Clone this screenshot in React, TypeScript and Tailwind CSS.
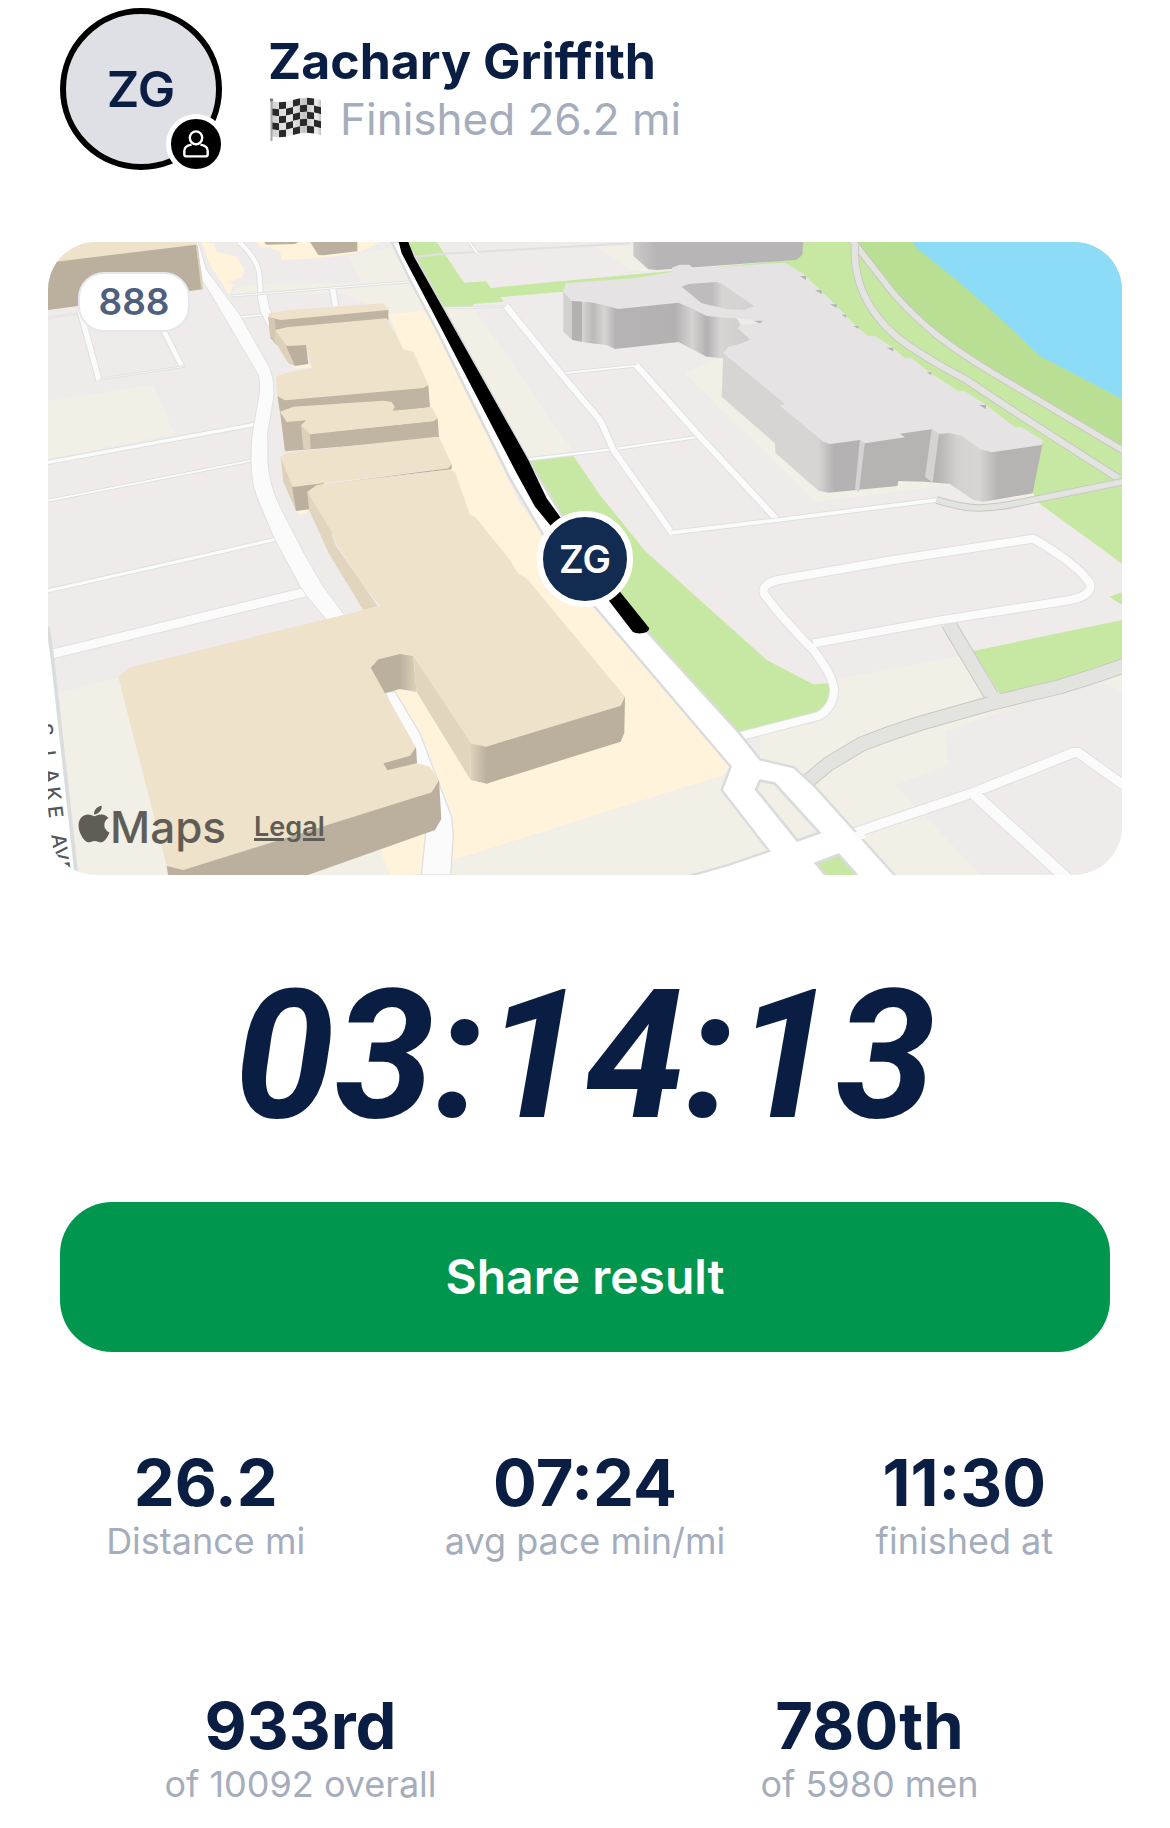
import React from 'react';
import { FaApple } from 'react-icons/fa';

interface Stat {
  value: string;
  label: string;
}

interface RoadProps {
  d: string;
  width: number;
  kind?: 'street' | 'path';
}

const SPLITS: Stat[] = [
  { value: '26.2', label: 'Distance mi' },
  { value: '07:24', label: 'avg pace min/mi' },
  { value: '11:30', label: 'finished at' },
];

const PLACINGS: Stat[] = [
  { value: '933rd', label: 'of 10092 overall' },
  { value: '780th', label: 'of 5980 men' },
];

// Each road is stroked twice: casing first, then the surface
const Road: React.FC<RoadProps> = ({ d, width, kind = 'street' }) => (
  <g fill="none" strokeLinejoin="round">
    <path d={d} stroke={kind === 'street' ? '#dfe0e1' : '#c8c8c3'} strokeWidth={width + 4} />
    <path d={d} stroke={kind === 'street' ? '#fbfbfb' : '#e3e4e0'} strokeWidth={width - 2} />
  </g>
);

const PersonIcon = () => (
  <svg viewBox="0 0 26 28" className="h-7 w-[26px]" fill="none" stroke="#fff" strokeWidth="2.4" aria-hidden="true">
    <ellipse cx="13" cy="7.8" rx="6.2" ry="6.4" />
    <path d="M8.6 14.6C4 15.4 1.3 17.6 1.3 21v3.2c0 1.4.8 2.2 2.2 2.2h19c1.4 0 2.2-.8 2.2-2.2V21c0-3.400-2.700-5.600-7.300-6.400" />
  </svg>
);

const FLAG_CELLS = [0, 1, 2, 3, 4].flatMap((row) => [0, 1, 2, 3, 4, 5, 6].map((col) => ({ row, col })));

const flagWave = (x: number) => 4.5 + Math.sin((x / 50) * Math.PI * 2) * 2 - x * 0.02;

const CheckeredFlag = () => (
  <svg viewBox="0 0 54 46" className="h-[46px] w-[54px]" aria-hidden="true">
    <defs>
      <linearGradient id="flagCloth" gradientUnits="userSpaceOnUse" x1="4" x2="54" y1="0" y2="0">
        <stop offset="0" stopColor="#cfcfcf" />
        <stop offset=".35" stopColor="#ececec" />
        <stop offset=".65" stopColor="#c4c4c4" />
        <stop offset=".9" stopColor="#ededed" />
        <stop offset="1" stopColor="#b5b5b5" />
      </linearGradient>
    </defs>
    {FLAG_CELLS.map(({ row, col }) => {
      const x = 4 + col * 7;
      const top = flagWave(x) + row * 7;
      const next = flagWave(x + 7) + row * 7;
      return (
        <path
          key={`${row}-${col}`}
          d={`M${x} ${top}L${x + 7} ${next}V${next + 7}L${x} ${top + 7}Z`}
          fill={(row + col) % 2 === 1 ? '#2a2a2a' : 'url(#flagCloth)'}
        />
      );
    })}
    <path d="M3.500 3v42" stroke="#a3a9ae" strokeWidth="2" />
    <circle cx="3.500" cy="4" r="1.800" fill="#6f7b86" />
  </svg>
);

const MapScene = () => (
  <svg viewBox="24 36 3222 1899" className="block h-full w-full" preserveAspectRatio="xMidYMid slice" aria-hidden="true">
    <defs>
      <linearGradient id="wingWall" gradientUnits="userSpaceOnUse" x1="1570" x2="2130" y1="0" y2="0">
        <stop offset="0" stopColor="#d3d0d0" />
        <stop offset=".046" stopColor="#d3d0d0" />
        <stop offset=".047" stopColor="#b3b1b2" />
        <stop offset=".098" stopColor="#b3b1b2" />
        <stop offset=".1" stopColor="#d8d4d4" />
        <stop offset=".16" stopColor="#bab8b8" />
        <stop offset=".22" stopColor="#d8d4d4" />
        <stop offset=".28" stopColor="#b5b3b4" />
        <stop offset=".6" stopColor="#b3b1b2" />
        <stop offset=".69" stopColor="#d6d2d2" />
        <stop offset=".77" stopColor="#b3b1b2" />
        <stop offset=".84" stopColor="#d8d4d4" />
        <stop offset="1" stopColor="#d0cccc" />
      </linearGradient>
      <linearGradient id="frontWall" gradientUnits="userSpaceOnUse" x1="2045" x2="3010" y1="0" y2="0">
        <stop offset="0" stopColor="#d8d4d4" />
        <stop offset=".3" stopColor="#d8d4d4" />
        <stop offset=".35" stopColor="#b4b2b3" />
        <stop offset=".43" stopColor="#b4b2b3" />
        <stop offset=".44" stopColor="#b5b4b2" />
        <stop offset=".67" stopColor="#b5b4b2" />
        <stop offset=".735" stopColor="#d5d1d1" />
        <stop offset=".8" stopColor="#d8d4d4" />
        <stop offset=".86" stopColor="#b5b4b2" />
        <stop offset="1" stopColor="#b5b4b2" />
      </linearGradient>
      <linearGradient id="northWall" gradientUnits="userSpaceOnUse" x1="1780" x2="1850" y1="0" y2="0">
        <stop offset="0" stopColor="#cdcaca" />
        <stop offset="1" stopColor="#b7b5b6" />
      </linearGradient>
      <linearGradient id="courtyard">
        <stop offset="0" stopColor="#bebcbd" />
        <stop offset=".42" stopColor="#bebcbd" />
        <stop offset=".56" stopColor="#d8d4d4" />
        <stop offset="1" stopColor="#d6d2d2" />
      </linearGradient>
      <linearGradient id="alcoveWall" gradientUnits="userSpaceOnUse" x1="1080" x2="1135" y1="0" y2="0">
        <stop offset="0" stopColor="#bab09d" />
        <stop offset="1" stopColor="#e1d5be" />
      </linearGradient>
      <linearGradient id="cornerWall" gradientUnits="userSpaceOnUse" x1="1288" x2="1340" y1="0" y2="0">
        <stop offset="0" stopColor="#e1d5be" />
        <stop offset="1" stopColor="#bab09d" />
      </linearGradient>
    </defs>

    <rect x="24" y="36" width="3222" height="1899" fill="#efebea" />

    {/* Land parcels */}
    <g fill="#f2efe6">
      <path d="M24 513 340 465 402 612 24 688z" />
      <path d="M40 1394 300 1325 1240 1890 2050 1635 2190 1863 1950 1935H24z" />
      <path d="M565 195 600 168 700 160 965 160 925 80 1080 45 1170 245 1045 250 905 190z" />
      <path d="M1210 235 1300 232 1600 665 1460 690z" />
      <path d="M1670 50 1790 45 1900 125 1770 122z" />
      <path d="M1935 430 2045 380 2300 700 2740 722 2730 765 2325 815 2190 680z" />
      <path d="M2975 765 3015 795 2990 830 2740 725z" />
      <path d="M2160 1500 2400 1345 2780 1275 2860 1420 3100 1370 2840 1460 2715 1505 2725 1605 2565 1665 2640 1740 2820 1935H2500L2160 1600z" />
      <path d="M3190 1360 3246 1335V1385z" />
    </g>
    <g fill="#fff3dc">
      <path d="M1045 252 1158 242 1440 820 1500 900 1640 1110 2070 1608 2050 1635 1240 1890 1140 1930 1050 1935 1020 1860 1000 1340 1300 1200 1150 600 1090 360z" />
      <path d="M485 36 520 40 530 65 590 80 612 118 605 145 568 155 580 165 568 195 505 95z" />
      <path d="M650 36H1020L1000 48 950 70 830 85 725 90 720 65 690 52 660 52z" />
      <path d="M765 405 815 402 815 412 765 416zM768 843 808 838 800 850 775 853z" />
    </g>

    {/* Parks */}
    <g fill="#c7e8a3">
      <path d="M1100 36H1190L1272 158 1338 154 1353 174 1575 152 2200 95 2300 200 1800 180 1570 185 1380 202 1392 215 1300 222 1300 232 1210 235z" />
      <path d="M2230 36H3246V1003L3190 960 3000 822 2960 760 2200 100z" />
      <path d="M3208 1100 3246 1087V1125z" />
      <path d="M2800 1263 3246 1170V1290L3060 1350 2882 1395z" />
      <path d="M1465 690 1600 678 1680 795 1815 962 2180 1290 2320 1363 2370 1360 2370 1430 2335 1450 2100 1512 1500 850z" />
    </g>
    <path d="M2435 36H2620L3246 505V660L2860 430Q2760 370 2690 315 2620 258 2560 190z" fill="#b9df94" />
    <path d="M2618 36 2635 58 2750 150 2870 255Q2960 340 3000 378 3040 400 3090 425L3246 507V36z" fill="#8cdcf8" />

    {/* Streets */}
    <Road d="M24 263 118 250" width={3} />
    <Road d="M121 245 177 450" width={18} />
    <Road d="M365 290 426 410" width={16} />
    <Road d="M180 447 435 409" width={4} />
    <Road d="M24 697 645 583" width={12} />
    <Road d="M24 812 635 692" width={7} />
    <Road d="M24 1082 580 957 710 927" width={11} />
    <Road d="M37 1272 800 1085" width={28} />
    <Road d="M598 262 680 253" width={7} />
    <Road d="M665 190 675 240 695 280" width={28} />
    <Road d="M598 36Q650 85 658 130L662 192" width={15} />
    <Road d="M570 198 680 190 1110 155" width={5} />
    <Road d="M878 176 887 230" width={18} />
    <path
      d="M468 36 487 150 555 265 655 435Q662 460 658 490L640 590Q630 650 634 720 636 770 660 825L705 930 782 1072 800 1098 860 1170H925Q880 1110 850 1070L795 975 720 830Q690 770 684 700L683 610 700 510Q706 460 690 415L600 255 500 120 475 36z"
      fill="#fbfbfb"
      stroke="#dfe0e1"
      strokeWidth="3"
    />
    <Road d="M1110 82 1215 71 1770 40" width={2} />
    <Road d="M1285 32 1312 70" width={7} />
    <Road d="M1210 234 1400 230" width={4} />
    <Road d="M1565 430 1790 407" width={7} />
    <Road d="M1465 688 1715 658 1980 620" width={9} />
    <Road d="M1398 228 1560 428 1650 535Q1680 565 1692 595L1720 660 1898 912" width={20} />
    <Road d="M1788 405 1980 620 2212 870" width={20} />
    <Road d="M1895 908 2190 873 2690 810" width={13} />
    <path
      d="M1035 1385H1065L1140 1510 1235 1760 1240 1820 1232 1935H1144L1157 1810 1120 1600z"
      fill="#fbfbfb"
      stroke="#dfe0e1"
      strokeWidth="4"
    />

    {/* Lakeside paths */}
    <Road d="M2435 30 2560 190Q2620 258 2690 315 2760 370 2860 430L3250 662" width={19} kind="path" />
    <Road d="M2445 45Q2440 120 2470 190 2500 260 2570 320 2640 375 2780 450L2900 530 3235 745" width={21} kind="path" />
    <Road d="M2690 810Q2770 835 2820 834 2880 832 2930 820L3250 755" width={19} kind="path" />
    <Road d="M2725 1180 2865 1415" width={42} kind="path" />
    <Road d="M2290 1665 2365 1602 2465 1542Q2550 1508 2640 1480L2860 1418 3060 1370Q3160 1340 3260 1304" width={42} kind="path" />
    <path d="M2842 1398 2862 1388 2876 1386 2890 1410 2860 1420z" fill="#e3e4e0" />

    <Road d="M2080 1524 2335 1458Q2380 1435 2382 1380 2380 1345 2345 1295L2320 1260Q2230 1170 2172 1092 2162 1062 2215 1050L2560 990 2980 926Q3110 1000 3150 1060 3160 1095 3090 1110L2700 1171 2320 1240" width={26} />
    <Road d="M2445 1808 2800 1688 3100 1568H3115L3250 1665" width={30} />
    <Road d="M2800 1690 3080 1945" width={36} />
    <path d="M2780 1682 2825 1668 2840 1682 2800 1703z" fill="#fbfbfb" />

    {/* Avenue along the course */}
    <path
      d="M1055 36 1110 150 1190 300 1410 745 1510 915 1660 1125 2072 1610 2045 1680 2187 1863 2065 1905 1940 1940H2568L2325 1670 2262 1612 2160 1588 2100 1512 1825 1210 1700 1080 1465 690 1100 36z"
      fill="#fff"
      stroke="#d9dbdc"
      strokeWidth="7"
    />
    <path d="M2160 1652 2203 1660 2338 1808 2272 1831 2148 1678z" fill="#f2efe6" stroke="#d9dbdc" strokeWidth="8" />
    <path d="M2328 1900 2396 1874 2455 1940H2360z" fill="#c7e8a3" stroke="#d9dbdc" strokeWidth="8" />
    <path d="M2432 1812 2462 1800 2480 1822 2455 1832z" fill="#fbfbfb" />
    <path d="M24 1180 104 1940H24z" fill="#fff" />
    <path d="M24 1190 38 1290 110 1940" fill="none" stroke="#dadddd" strokeWidth="11" />

    {/* Shops on the west side */}
    <g fill="#efe2ca">
      <path d="M24 36H470L468 45 24 102z" />
      <path d="M685 250 750 240 1030 220 1045 236 1045 242 720 272 685 268z" />
      <path d="M24 98 468 44 488 178 24 240z" fill="#bab09d" />
      <path d="M468 44 473 44 490 178 484 180z" fill="#ddd1bb" />
      <path d="M672 36H775L765 42 680 44zM810 36H952V64L850 76 835 75z" fill="#bab09d" />
      <path d="M685 262 722 270 1045 240V270L760 305 710 345 692 325z" fill="#bfb5a2" />
      <path d="M685 262 705 268 710 345 690 318z" fill="#d4c8b2" />
      <path d="M705 300 745 350 765 407 745 400 705 335z" fill="#ddd1bb" />
      <path d="M705 300 740 292 1040 265 1070 318 1090 358 1120 365 1165 465 1150 475 735 510 712 500 708 440 740 428 815 415 798 345 740 348z" />
      <path d="M738 348 798 345 805 402 765 408z" fill="#bab09d" />
      <path d="M712 498 735 511 1150 474 1165 465 1170 532 1060 545 720 548z" fill="#bfb5a2" />
      <path d="M720 545 800 572 785 600 805 612 1180 573 1193 565 1197 622 1110 634 735 664z" fill="#bfb5a2" />
      <path d="M720 545 760 530 1030 512 1055 516 1064 530 1058 542 1175 532 1193 565 1180 573 810 613 788 600 783 585 800 571 740 576z" />
      <path d="M783 585 810 612 812 658 790 656z" fill="#ddd1bb" />
      <path d="M722 680 760 770 768 843 730 755z" fill="#ddd1bb" />
      <path d="M756 768 860 755 808 790 808 838 768 843z" fill="#bab09d" />
      <path d="M722 680 740 668 1190 620 1200 628 1235 703 1225 715 825 763 758 771z" />
      <path d="M1235 703V718L860 763 1225 715z" fill="#bab09d" />
      <path d="M802 785 875 912 885 945 1012 1128 970 1140 888 1005 866 970 808 840z" fill="#e1d5be" />
      <path d="M802 785 830 765 1225 719 1245 725 1290 855 1305 860 1410 990 1435 1032 1460 1045 1755 1400 1742 1427 1338 1550 1290 1540 1120 1278 1080 1272 1015 1288 992 1313 1127 1550 1110 1577 1030 1600 1042 1620 1130 1600 1170 1610 1195 1650 1175 1687 430 1920 380 1908 235 1342 265 1313 1020 1128 965 1060 885 935 878 908z" />
      <path d="M802 785 878 910 876 918 888 948 1012 1128 970 1138 888 1005 884 985 866 965 808 840z" fill="#e1d5be" />
      <path d="M992 1313 1015 1288 1080 1272 1120 1278 1130 1386 1080 1377 1035 1390z" fill="url(#alcoveWall)" />
      <path d="M1120 1278 1292 1540V1650L1130 1386z" fill="#e1d5be" />
      <path d="M1290 1540 1338 1550 1742 1427 1755 1400 1753 1508 1742 1535 1340 1661 1293 1650z" fill="url(#cornerWall)" />
      <path d="M1030 1600 1110 1577 1128 1550 1131 1600 1042 1621z" fill="#bab09d" />
      <path d="M380 1908 430 1920 1175 1687 1197 1650 1204 1767 1185 1800 790 1940H385z" fill="#bab09d" />
    </g>

    {/* Lakefront block */}
    <path d="M1780 36H2290L2287 75 2268 90 1850 120 1825 118 1780 78z" fill="url(#northWall)" />
    <path d="M1570 185 1595 212 1690 220 1915 210 2090 265 2130 330 2065 355 2050 385 2000 380 1915 336 1725 357 1700 345 1640 338 1597 330 1570 305z" fill="url(#wingWall)" />
    <path d="M2050 370 2240 510 2350 635 2680 595 3008 640 2978 790 2830 815 2800 810 2730 762 2655 755 2575 753 2572 768 2365 788 2335 782 2206 668 2205 640 2045 500z" fill="url(#frontWall)" />
    <path d="M2460 625 2475 635 2457 786 2445 777zM2675 598 2697 612 2678 758 2655 740z" fill="#d6d2d2" />
    <path
      d="M1577 160 1780 145 1897 126 1895 113 1920 104 1948 104 1962 116 2235 98 2292 133 2340 180 2385 222 2415 255 2450 290 2485 318H2505L2555 350 2595 385 2615 384 2672 430 2755 483 2772 482 2835 522 2925 592 2945 591 3010 632 3005 645 2855 667 2820 658 2765 617 2725 609 2697 612 2675 598 2580 611 2595 622 2475 640 2460 630 2370 642 2350 635 2220 527 2235 522 2050 370 2065 350 2135 333 2092 295 2100 286 2165 278V271L2040 262 2000 258 1960 238 1915 218 1735 237 1690 225 1625 210 1595 212 1570 185z"
      fill="#e5e3e4"
    />
    <path d="M1925 170 1945 162 2030 156 2048 163 2142 228 2115 240 2060 237 1985 220z" fill="url(#courtyard)" />
    <path
      d="M2280 138H2298V150zM2325 181H2345V192zM2370 223H2390V233zM2405 254H2418V263zM2440 288H2455V296zM2540 353H2560V364zM2660 427H2674V436zM2818 525H2838V538zM2140 272H2170L2160 280z"
      fill="#b3b1b2"
    />

    {/* Course */}
    <path d="M1076 36H1105L1122 80 1212 240 1465 690 1520 805 1560 860 1740 1085 1828 1195Q1826 1209 1804 1210 1786 1211 1778 1205L1705 1110 1530 885 1485 830 1430 730 1175 240 1085 70z" fill="#000" />

    <text
      transform="translate(-7 1483) rotate(83)"
      className="fill-[#55575a] text-[60px] font-medium"
      x="0 50 82 137 192 249 300 334 372 418"
    >
      S LAKE AVE
    </text>
  </svg>
);

const CourseMap = () => (
  <section aria-label="Course map" className="relative mx-12 mt-[72px] aspect-[358/211] overflow-hidden rounded-[48px]">
    <MapScene />
    <span className="absolute top-[30px] left-[30px] flex h-[60px] w-[112px] items-center justify-center rounded-[26px] border-2 border-[#e6e6ee] bg-white text-[37px] leading-[40px] font-semibold text-[#4f5f7e]">
      888
    </span>
    <div className="absolute inset-0 flex items-center justify-center">
      <span className="flex size-[96px] items-center justify-center rounded-full border-6 border-white bg-[#112c50] text-[38px] leading-[40px] font-semibold text-white">
        ZG
      </span>
    </div>
    <div className="absolute bottom-5 left-[30px] flex items-center text-[#5f5d56]">
      <FaApple className="mb-1.5 h-[42px] w-8" aria-hidden="true" />
      <span className="text-[44px] leading-[56px] font-medium">Maps</span>
      <a href="#legal" className="ml-7 text-[27px] leading-[40px] font-semibold underline decoration-3 underline-offset-2">
        Legal
      </a>
    </div>
  </section>
);

const StatCell: React.FC<Stat> = ({ value, label }) => (
  <div className="flex flex-col-reverse text-center">
    <dt className="text-[36px] leading-[48px] text-[#a5adbc]">{label}</dt>
    <dd className="text-[65px] leading-[68px] font-bold text-[#0a1e43]">{value}</dd>
  </div>
);

const App = () => {
  return (
    <main className="w-full bg-white pt-2 pb-5 font-[Inter,sans-serif] text-[#0a1e43]">
      <header className="flex items-center gap-[46px] px-[60px]">
        <div className="relative flex size-[162px] shrink-0 items-center justify-center rounded-full border-6 border-black bg-[#dfe0e6] text-[50px] leading-[60px] font-semibold">
          ZG
          <span className="absolute -right-2.5 -bottom-2.5 flex size-[60px] items-center justify-center rounded-full border-5 border-white bg-black">
            <PersonIcon />
          </span>
        </div>
        <div>
          <h1 className="text-[50px] leading-[60px] font-bold">Zachary Griffith</h1>
          <p className="flex items-center gap-[18px] text-[44px] leading-[56px] text-[#a5adbc]">
            <CheckeredFlag />
            Finished 26.2 mi
          </p>
        </div>
      </header>

      <CourseMap />

      <p className="mt-[91px] text-center font-[Roboto,sans-serif] text-[180px] leading-[180px] font-bold italic">
        03:14:13
      </p>

      <div className="mt-14 px-[60px]">
        <button
          type="button"
          className="h-[150px] w-full rounded-[52px] bg-[#01964e] text-[48px] leading-[60px] font-semibold text-white"
        >
          Share result
        </button>
      </div>

      <dl className="mt-[97px] grid grid-cols-3 px-4">
        {SPLITS.map((stat) => (
          <StatCell key={stat.label} {...stat} />
        ))}
      </dl>

      <dl className="mt-[127px] grid grid-cols-2 px-4">
        {PLACINGS.map((stat) => (
          <StatCell key={stat.label} {...stat} />
        ))}
      </dl>
    </main>
  );
};

export default App;
